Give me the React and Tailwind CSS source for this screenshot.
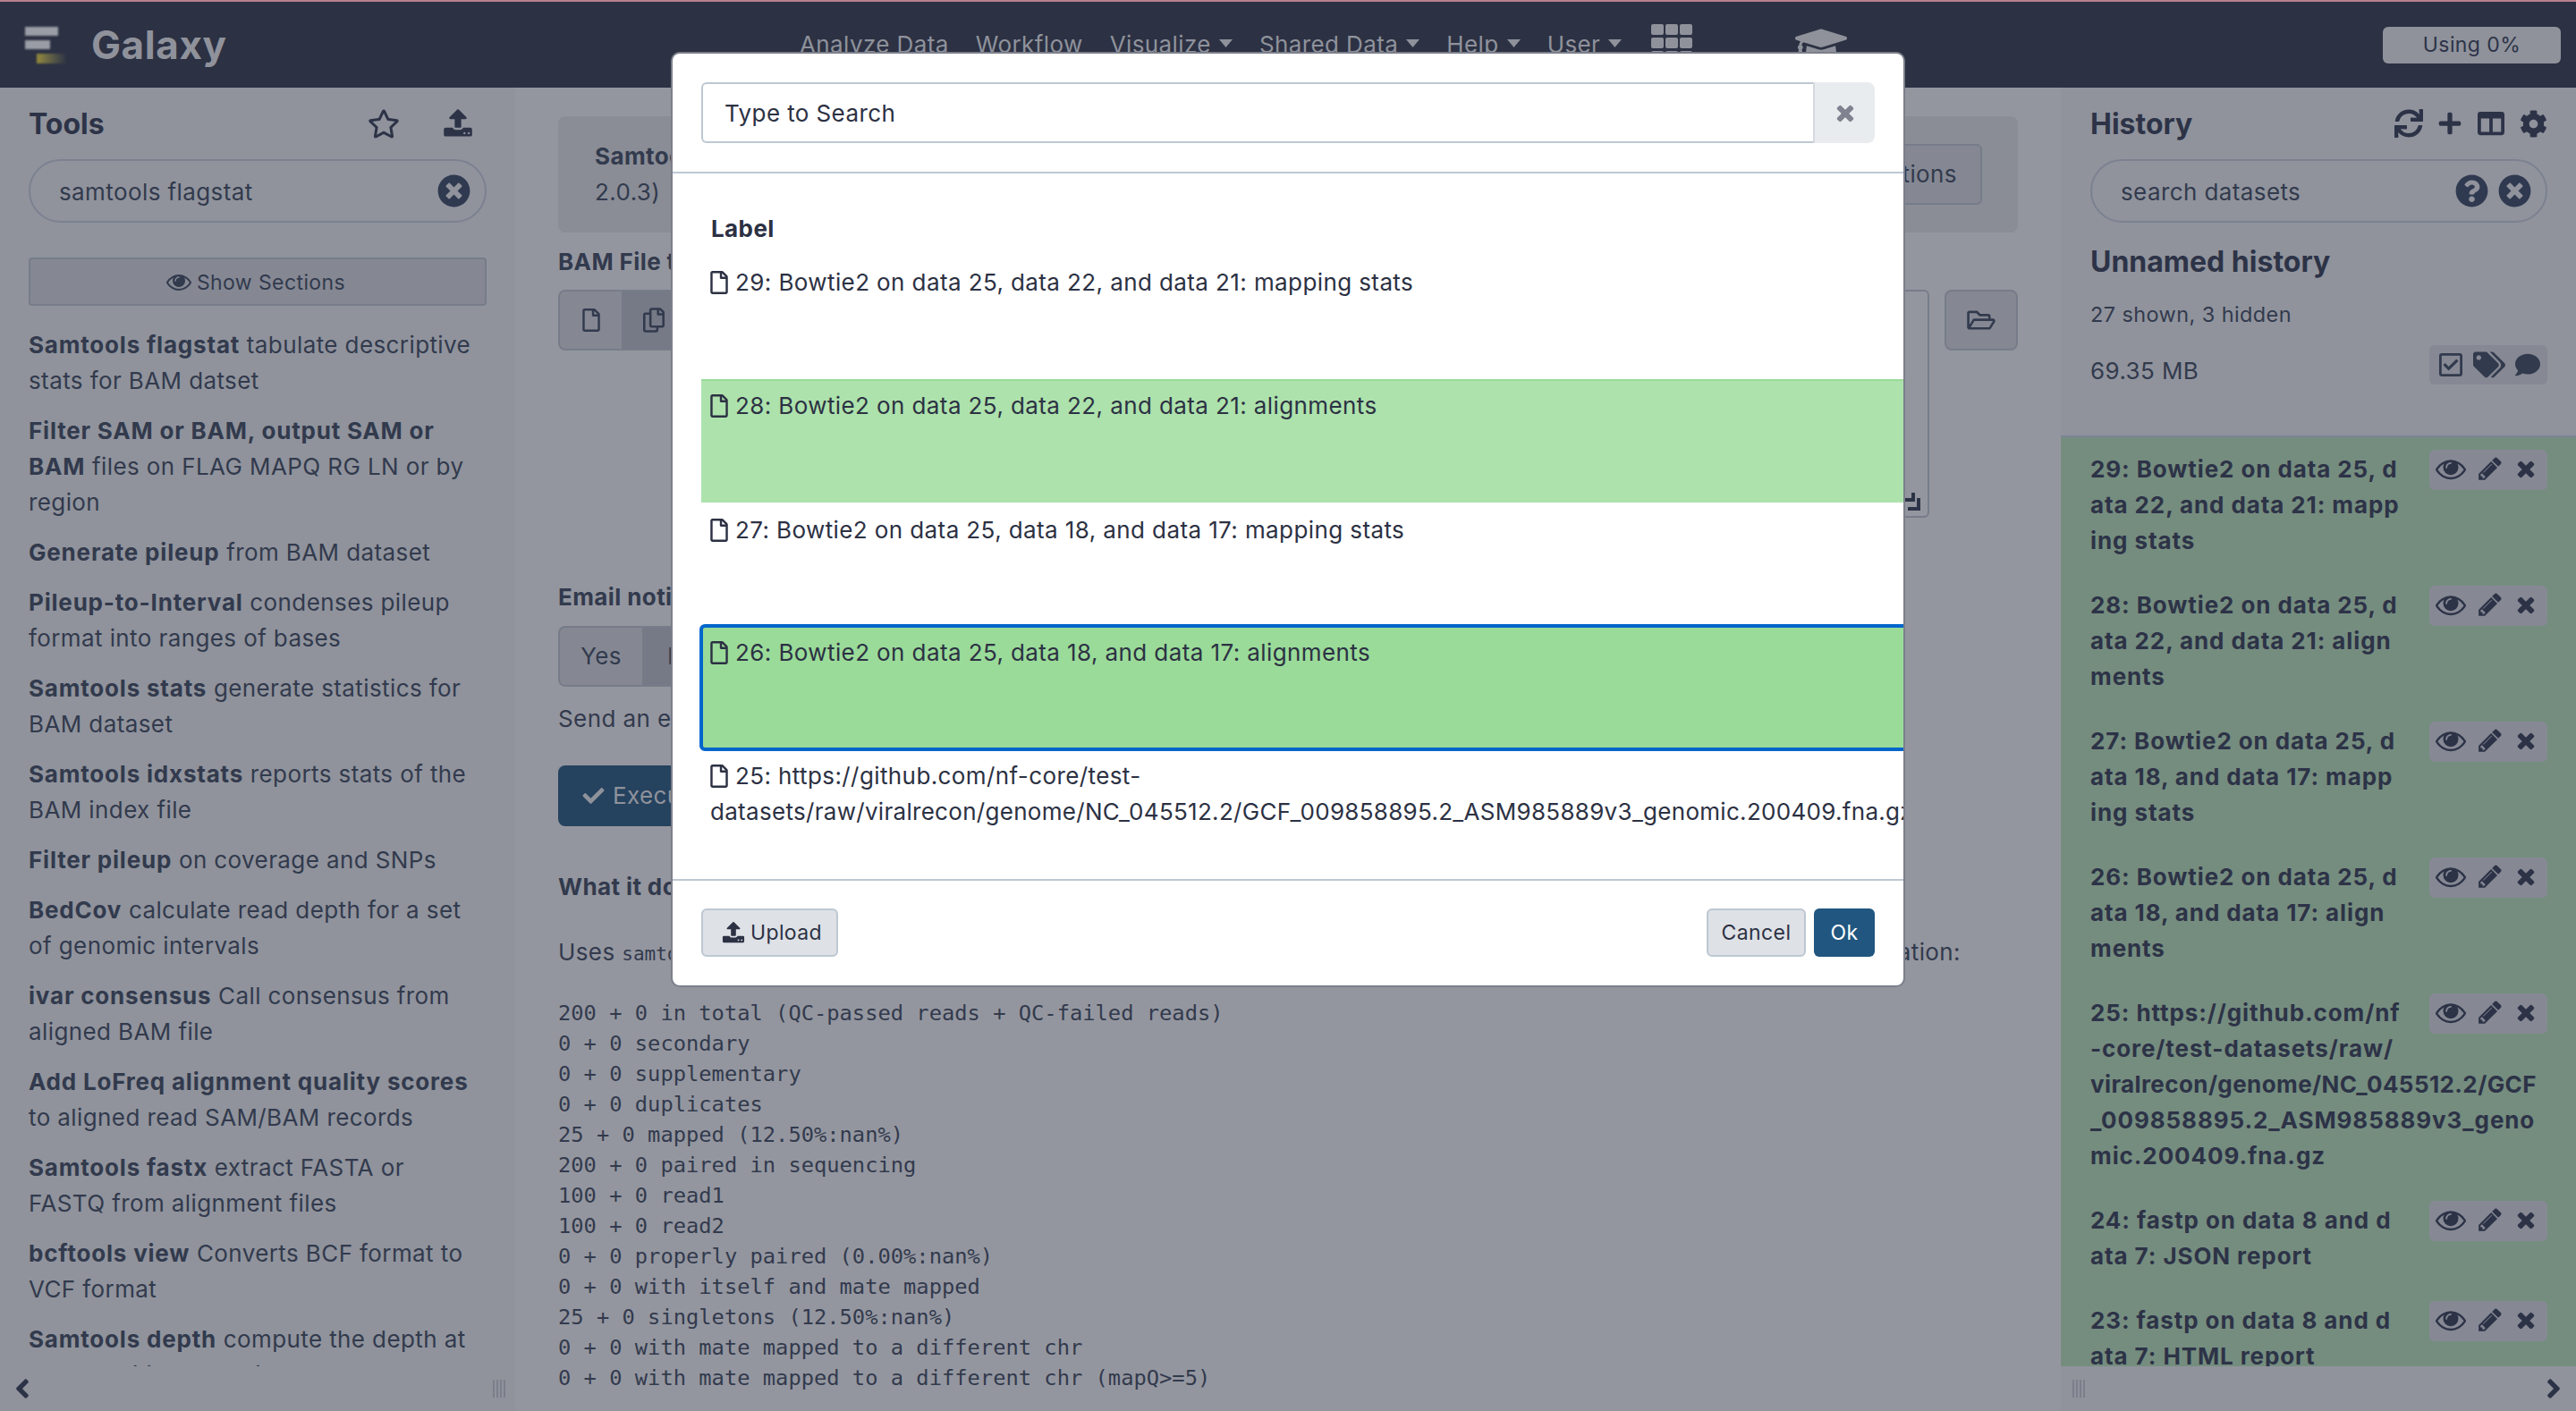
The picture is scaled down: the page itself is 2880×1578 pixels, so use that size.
import { FaRegStar, FaTimesCircle, FaQuestionCircle, FaSync, FaPlus, FaColumns, FaCog, FaRegCheckSquare, FaTags, FaComment, FaRegFile, FaRegCopy, FaRegFolderOpen, FaCheck, FaGraduationCap, FaAngleLeft, FaAngleRight } from "react-icons/fa";

const Upload = ({ className }) => (
  <svg viewBox="0 0 1792 1792" fill="currentColor" className={className}>
    <path d="M1344 1472q0-26-19-45t-45-19-45 19-19 45 19 45 45 19 45-19 19-45zm256 0q0-26-19-45t-45-19-45 19-19 45 19 45 45 19 45-19 19-45zm128-224v320q0 40-28 68t-68 28h-1472q-40 0-68-28t-28-68v-320q0-40 28-68t68-28h427q21 56 70.5 92t110.5 36h256q61 0 110.5-36t70.5-92h427q40 0 68 28t28 68zm-325-648q-17 40-59 40h-256v448q0 26-19 45t-45 19h-256q-26 0-45-19t-19-45v-448h-256q-42 0-59-40-17-39 14-69l448-448q18-19 45-19t45 19l448 448q31 30 14 69z" />
  </svg>
);

const Eye = ({ className }) => (
  <svg viewBox="0 0 1792 1792" fill="currentColor" className={className}>
    <path d="M1664 960q-152-236-381-353 61 104 61 225 0 185-131.5 316.5t-316.5 131.5-316.5-131.5-131.5-316.5q0-121 61-225-229 117-381 353 133 205 333.5 326.5t434.5 121.5 434.5-121.5 333.5-326.5zm-720-384q0-20-14-34t-34-14q-125 0-214.5 89.5t-89.5 214.5q0 20 14 34t34 14 34-14 14-34q0-86 61-147t147-61q20 0 34-14t14-34zm848 384q0 34-20 69-140 230-376.5 368.5t-499.5 138.5-499.5-139-376.5-368q-20-35-20-69t20-69q140-229 376.5-368t499.5-139 499.5 139 376.5 368q20 35 20 69z" />
  </svg>
);

const Pencil = ({ className }) => (
  <svg viewBox="0 0 1792 1792" fill="currentColor" className={className}>
    <path d="M491 1536l91-91-235-235-91 91v107h128v128h107zm523-928q0-22-22-22-10 0-17 7l-542 542q-7 7-7 17 0 22 22 22 10 0 17-7l542-542q7-7 7-17zm-54-192l416 416-832 832h-416v-416zm683 96q0 53-37 90l-166 166-416-416 166-165q36-38 90-38 53 0 91 38l235 234q37 39 37 91z" />
  </svg>
);

const Times = ({ className }) => (
  <svg viewBox="0 0 1792 1792" fill="currentColor" className={className}>
    <path d="M1490 1322q0 40-28 68l-136 136q-28 28-68 28t-68-28l-294-294-294 294q-28 28-68 28t-68-28l-136-136q-28-28-28-68t28-68l294-294-294-294q-28-28-28-68t28-68l136-136q28-28 68-28t68 28l294 294 294-294q28-28 68-28t68 28l136 136q28 28 28 68t-28 68l-294 294 294 294q28 28 28 68z" />
  </svg>
);

const GridIcon = () => (
  <svg width="46" height="46" viewBox="0 0 46 46" fill="currentColor" className="shrink-0 ml-[3px]">
    <rect x="0" y="0" width="14" height="12" rx="2" />
    <rect x="16" y="0" width="14" height="12" rx="2" />
    <rect x="32" y="0" width="14" height="12" rx="2" />
    <rect x="0" y="15" width="14" height="12" rx="2" />
    <rect x="16" y="15" width="14" height="12" rx="2" />
    <rect x="32" y="15" width="14" height="12" rx="2" />
    <rect x="0" y="30" width="14" height="12" rx="2" />
    <rect x="16" y="30" width="14" height="12" rx="2" />
    <rect x="32" y="30" width="14" height="12" rx="2" />
  </svg>
);

const tools = [
  ["Samtools flagstat", " tabulate descriptive stats for BAM datset"],
  ["Filter SAM or BAM, output SAM or BAM", " files on FLAG MAPQ RG LN or by region"],
  ["Generate pileup", " from BAM dataset"],
  ["Pileup-to-Interval", " condenses pileup format into ranges of bases"],
  ["Samtools stats", " generate statistics for BAM dataset"],
  ["Samtools idxstats", " reports stats of the BAM index file"],
  ["Filter pileup", " on coverage and SNPs"],
  ["BedCov", " calculate read depth for a set of genomic intervals"],
  ["ivar consensus", " Call consensus from aligned BAM file"],
  ["Add LoFreq alignment quality scores", " to aligned read SAM/BAM records"],
  ["Samtools fastx", " extract FASTA or FASTQ from alignment files"],
  ["bcftools view", " Converts BCF format to VCF format"],
  ["Samtools depth", " compute the depth at each position or region"],
];

const flagstat = [
  "200 + 0 in total (QC-passed reads + QC-failed reads)",
  "0 + 0 secondary",
  "0 + 0 supplementary",
  "0 + 0 duplicates",
  "25 + 0 mapped (12.50%:nan%)",
  "200 + 0 paired in sequencing",
  "100 + 0 read1",
  "100 + 0 read2",
  "0 + 0 properly paired (0.00%:nan%)",
  "0 + 0 with itself and mate mapped",
  "25 + 0 singletons (12.50%:nan%)",
  "0 + 0 with mate mapped to a different chr",
  "0 + 0 with mate mapped to a different chr (mapQ>=5)",
];

const datasets = [
  "29: Bowtie2 on data 25, data 22, and data 21: mapping stats",
  "28: Bowtie2 on data 25, data 22, and data 21: alignments",
  "27: Bowtie2 on data 25, data 18, and data 17: mapping stats",
  "26: Bowtie2 on data 25, data 18, and data 17: alignments",
];

// history names break mid-word in the panel, lines kept as they fall
const historyItems = [
  ["29: Bowtie2 on data 25, d", "ata 22, and data 21: mapp", "ing stats"],
  ["28: Bowtie2 on data 25, d", "ata 22, and data 21: align", "ments"],
  ["27: Bowtie2 on data 25, d", "ata 18, and data 17: mapp", "ing stats"],
  ["26: Bowtie2 on data 25, d", "ata 18, and data 17: align", "ments"],
  ["25: https://github.com/nf", "-core/test-datasets/raw/", "viralrecon/genome/NC_045512.2/GCF", "_009858895.2_ASM985889v3_geno", "mic.200409.fna.gz"],
  ["24: fastp on data 8 and d", "ata 7: JSON report"],
  ["23: fastp on data 8 and d", "ata 7: HTML report"],
];

const NavItem = ({ label, caret }) => (
  <span className="flex items-center gap-[9px] whitespace-nowrap">
    {label}
    {caret && (
      <svg width="15" height="9" viewBox="0 0 15 9" fill="currentColor" className="-mt-1">
        <path d="M0 0h15L7.5 9z" />
      </svg>
    )}
  </span>
);

const Handle = () => (
  <div className="w-[14px] h-[20px] flex justify-between">
    <span className="w-[2px] bg-[#7b7f8b]" />
    <span className="w-[2px] bg-[#7b7f8b]" />
    <span className="w-[2px] bg-[#7b7f8b]" />
    <span className="w-[2px] bg-[#7b7f8b]" />
  </div>
);

const FileRow = ({ children, className }) => (
  <div className={className}>
    <FaRegFile className="inline-block w-[20px] h-[26px] mr-[8px] align-[-4px]" />
    {children}
  </div>
);

export default function App() {
  return (
    <div className="relative w-[2880px] h-[1578px] overflow-hidden flex flex-col bg-[#94969f] text-[#2d3347] text-[26px] leading-[40px] tracking-[0.4px] [font-family:Inter,sans-serif]">
      {/* masthead */}
      <header className="h-[98px] shrink-0 border-t-2 border-[#b97f8e] bg-[#2c3143] text-[#8f929b] flex items-center relative">
        <div className="w-[894px] shrink-0 flex items-center">
          <div className="w-[48px] ml-[28px] shrink-0 flex flex-col gap-[5px] blur-[1px]">
            <span className="w-[37px] h-[10px] bg-[#9a9da6]" />
            <span className="w-[28px] h-[10px] bg-[#9a9da6]" />
            <span className="w-[34px] h-[11px] ml-[13px] bg-gradient-to-r from-[#94893a] to-[#2c3143]" />
          </div>
          <span className="ml-[26px] text-[44px] font-bold tracking-[0.6px]">Galaxy</span>
        </div>
        <nav className="flex items-center gap-[30px]">
          <NavItem label="Analyze Data" />
          <NavItem label="Workflow" />
          <NavItem label="Visualize" caret />
          <NavItem label="Shared Data" caret />
          <NavItem label="Help" caret />
          <NavItem label="User" caret />
          <GridIcon />
          <FaGraduationCap className="ml-[85px] w-[58px] h-[58px] shrink-0" />
        </nav>
        <div className="ml-auto mr-[17px] w-[199px] h-[41px] rounded-[6px] bg-[#8f929b] text-[#2d3347] text-[23px] leading-[41px] text-center">Using 0%</div>
      </header>

      <div className="flex-1 flex min-h-0">
        {/* tools panel */}
        <aside className="w-[576px] shrink-0 bg-[#90939c] flex flex-col">
          <div className="flex-1 min-h-0 overflow-hidden pl-[32px] pr-[32px] pt-[16px]">
            <div className="flex items-center justify-between h-[48px]">
              <h2 className="text-[32px] font-bold tracking-normal mt-[2px]">Tools</h2>
              <div className="flex items-center gap-[48px] pr-[15px]">
                <FaRegStar className="w-[36px] h-[33px]" />
                <Upload className="w-[34px] h-[34px]" />
              </div>
            </div>
            <div className="mt-[16px] h-[71px] rounded-full border-2 border-[#7b8190] flex items-center justify-between pl-[32px] pr-[16px] text-[#323a4d]">
              <span className="pt-[2px]">samtools flagstat</span>
              <FaTimesCircle className="w-[37px] h-[37px] text-[#2f3950]" />
            </div>
            <div className="mt-[39px] h-[54px] rounded-[4px] border-2 border-[#767c8a] bg-[#858893] flex items-center justify-center gap-[6px] pr-[4px] text-[23px] text-[#323a4d]">
              <Eye className="w-[28px] h-[28px]" />
              <span className="pt-[2px]">Show Sections</span>
            </div>
            <div className="mt-[24px] flex flex-col gap-[16px] text-[#323a4d]">
              {tools.map((t) => (
                <p key={t[0]}>
                  <b className="font-bold tracking-[0.8px]">{t[0]}</b>
                  {t[1]}
                </p>
              ))}
            </div>
          </div>
          <div className="h-[50px] shrink-0 flex items-center justify-between pl-[10px] pr-[11px]">
            <FaAngleLeft className="w-[30px] h-[34px]" />
            <Handle />
          </div>
        </aside>

        {/* center panel */}
        <main className="flex-1 min-w-0 pl-[48px] pr-[48px] pt-[32px] text-[#323a4d]">
          <div className="h-[130px] rounded-[8px] bg-[#8a8d96] flex items-center justify-between pl-[41px] pr-[40px]">
            <div>
              <b className="font-bold">Samtools flagstat</b> tabulate descriptive stats for BAM datset (Galaxy Version
              <br />
              2.0.3)
            </div>
            <div className="h-[68px] rounded-[6px] border-2 border-[#767c8a] bg-[#858893] px-[26px] flex items-center">Options</div>
          </div>
          <div className="mt-[13px] font-bold h-[40px]">BAM File to Convert</div>
          <div className="mt-[11px] flex gap-[17px]">
            <div className="flex items-start">
              <div className="w-[71px] h-[68px] rounded-l-[8px] border-2 border-r-0 border-[#767c8a] bg-[#858893] flex items-center justify-center">
                <FaRegFile className="w-[20px] h-[26px]" />
              </div>
              <div className="w-[71px] h-[68px] border-y-2 border-[#767c8a] bg-[#767a86] flex items-center justify-center">
                <FaRegCopy className="w-[24px] h-[28px]" />
              </div>
            </div>
            <div className="relative flex-1 h-[255px] rounded-[6px] border-2 border-[#767c8a]">
              <svg width="18" height="20" viewBox="0 0 18 20" fill="#2d3347" className="absolute right-[8px] bottom-[6px]">
                <path d="M8 0h4v10H0V6h8zM14 6h4v14H4v-4h10z" />
              </svg>
            </div>
            <div className="w-[82px] h-[68px] rounded-[8px] border-2 border-[#767c8a] bg-[#858893] flex items-center justify-center">
              <FaRegFolderOpen className="w-[32px] h-[28px]" />
            </div>
          </div>
          <div className="mt-[69px] font-bold">Email notification</div>
          <div className="mt-[12px] flex">
            <div className="w-[94px] h-[68px] rounded-l-[8px] border-2 border-r-0 border-[#767c8a] bg-[#858893] flex items-center justify-center">Yes</div>
            <div className="w-[94px] h-[68px] rounded-r-[8px] border-2 border-l-0 border-[#767c8a] bg-[#767a86] flex items-center justify-center">No</div>
          </div>
          <p className="mt-[16px]">Send an email notification when the job completes.</p>
          <div className="mt-[32px] w-[220px] h-[68px] rounded-[8px] bg-[#25425f] text-[#8f929b] flex items-center pl-[26px] gap-[8px]">
            <FaCheck className="w-[27px] h-[24px]" />
            Execute
          </div>
          <div className="mt-[48px] font-bold h-[40px]">What it does</div>
          <div className="mt-[33px] flex justify-between w-[1568px]">
            <span>
              Uses <code className="text-[21px] tracking-normal [font-family:'DejaVu_Sans_Mono',monospace]">samtools flagstat</code> to report
            </span>
            <span>information:</span>
          </div>
          <pre className="mt-[29px] text-[23.75px] leading-[34px] tracking-normal [font-family:'DejaVu_Sans_Mono',monospace]">{flagstat.join("\n")}</pre>
        </main>

        {/* history panel */}
        <aside className="w-[576px] shrink-0 bg-[#90939c] flex flex-col">
          <div className="pl-[33px] pr-[32px] pt-[16px]">
            <div className="flex items-center justify-between h-[48px]">
              <h2 className="text-[32px] font-bold tracking-normal mt-[2px]">History</h2>
              <div className="flex items-center gap-[16px]">
                <FaSync className="w-[32px] h-[32px]" />
                <FaPlus className="w-[28px] h-[28px]" />
                <FaColumns className="w-[32px] h-[30px]" />
                <FaCog className="w-[31px] h-[31px]" />
              </div>
            </div>
            <div className="mt-[16px] h-[71px] rounded-full border-2 border-[#7b8190] flex items-center pl-[32px] pr-[16px] text-[#323a4d]">
              <span className="pt-[2px]">search datasets</span>
              <FaQuestionCircle className="ml-auto w-[37px] h-[37px] text-[#2f3950]" />
              <FaTimesCircle className="ml-[11px] w-[37px] h-[37px] text-[#2f3950]" />
            </div>
            <div className="mt-[20px] h-[47px] leading-[48px] text-[32px] font-bold tracking-normal">Unnamed history</div>
            <div className="mt-[16px] text-[23.5px] text-[#323a4d]">27 shown, 3 hidden</div>
            <div className="mt-[14px] h-[101px] flex items-start justify-between text-[#323a4d]">
              <span className="pt-[9px]">69.35 MB</span>
              <div className="w-[132px] h-[44px] rounded-[6px] bg-[#868994] flex items-center justify-between pl-[11px] pr-[8px]">
                <FaRegCheckSquare className="w-[26px] h-[30px]" />
                <FaTags className="w-[36px] h-[32px]" />
                <FaComment className="w-[28px] h-[28px]" />
              </div>
            </div>
          </div>
          <div className="flex-1 min-h-0 overflow-hidden border-t-2 border-[#7b8294] bg-[#758d7f]">
            {historyItems.map((lines) => (
              <div key={lines[0]} className="pl-[33px] pr-[32px] py-[16px] font-bold tracking-[0.9px] whitespace-nowrap flow-root">
                <div className="float-right -mt-[2px] w-[132px] h-[45px] pb-[3px] rounded-[6px] bg-[#868994] flex items-center justify-between pl-[7px] pr-[10px]">
                  <Eye className="w-[34px] h-[34px]" />
                  <Pencil className="w-[30px] h-[30px]" />
                  <Times className="w-[28px] h-[28px]" />
                </div>
                {lines.map((line) => (
                  <div key={line} className={line.startsWith("viralrecon") ? "tracking-[0.4px]" : ""}>{line}</div>
                ))}
              </div>
            ))}
          </div>
          <div className="h-[50px] shrink-0 flex items-center justify-between pl-[13px] pr-[10px]">
            <Handle />
            <FaAngleRight className="w-[30px] h-[34px]" />
          </div>
        </aside>
      </div>

      {/* modal over the dimmed page */}
      <div className="absolute left-[752px] top-[60px] w-[1376px] h-[1042px] rounded-[8px] bg-white flex flex-col overflow-hidden shadow-[0_0_0_2px_#7c7f8b] text-[#2c3143]">
        <div className="h-[134px] shrink-0 border-b-2 border-[#bdc8d2] px-[32px] pt-[32px]">
          <div className="flex h-[68px]">
            <div className="flex-1 rounded-l-[6px] border-2 border-r-0 border-[#bdc8d2] pl-[24px] pt-[2px] flex items-center text-[#2c3143]">Type to Search</div>
            <div className="w-[69px] rounded-r-[8px] bg-[#e9ecef] border-l-2 border-[#d5d9df] flex items-center justify-center text-[#80838f]">
              <Times className="w-[28px] h-[28px]" />
            </div>
          </div>
        </div>
        <div className="flex-1 min-h-0 overflow-hidden pl-[32px] pt-[42px]">
          <div className="pl-[11px] font-bold h-[40px]">Label</div>
          <div className="mt-[10px] w-[1500px]">
            <FileRow className="h-[138px] pl-[10px] pt-[10px]">{datasets[0]}</FileRow>
            <FileRow className="h-[138px] pl-[10px] pt-[8px] border-t-2 border-[#9bdb9a] bg-[#ade2ac]">{datasets[1]}</FileRow>
            <FileRow className="h-[138px] pl-[10px] pt-[11px]">{datasets[2]}</FileRow>
            <FileRow className="relative -my-[2px] -ml-[2px] h-[142px] rounded-l-[6px] border-4 border-[#0066cc] bg-[#9adb99] pl-[8px] pt-[8px]">{datasets[3]}</FileRow>
            <FileRow className="h-[138px] pl-[10px] pt-[10px] whitespace-nowrap">
              25: https://github.com/nf-core/test-
              <br />
              <span className="tracking-[0.3px]">datasets/raw/viralrecon/genome/NC_045512.2/GCF_009858895.2_ASM985889v3_genomic.200409.fna.gz</span>
            </FileRow>
          </div>
        </div>
        <div className="h-[119px] shrink-0 border-t-2 border-[#bdc8d2] px-[32px] pt-[31px] flex items-start text-[23px]">
          <div className="w-[153px] h-[54px] rounded-[6px] border-2 border-[#bdc8d2] bg-[#dee1e6] flex items-center justify-center gap-[6px] pl-[5px]">
            <Upload className="w-[26px] h-[26px]" />
            Upload
          </div>
          <div className="ml-auto w-[111px] h-[54px] rounded-[6px] border-2 border-[#bdc8d2] bg-[#dee1e6] flex items-center justify-center">Cancel</div>
          <div className="ml-[9px] w-[68px] h-[54px] rounded-[6px] bg-[#20567f] text-white flex items-center justify-center">Ok</div>
        </div>
      </div>
    </div>
  );
}
